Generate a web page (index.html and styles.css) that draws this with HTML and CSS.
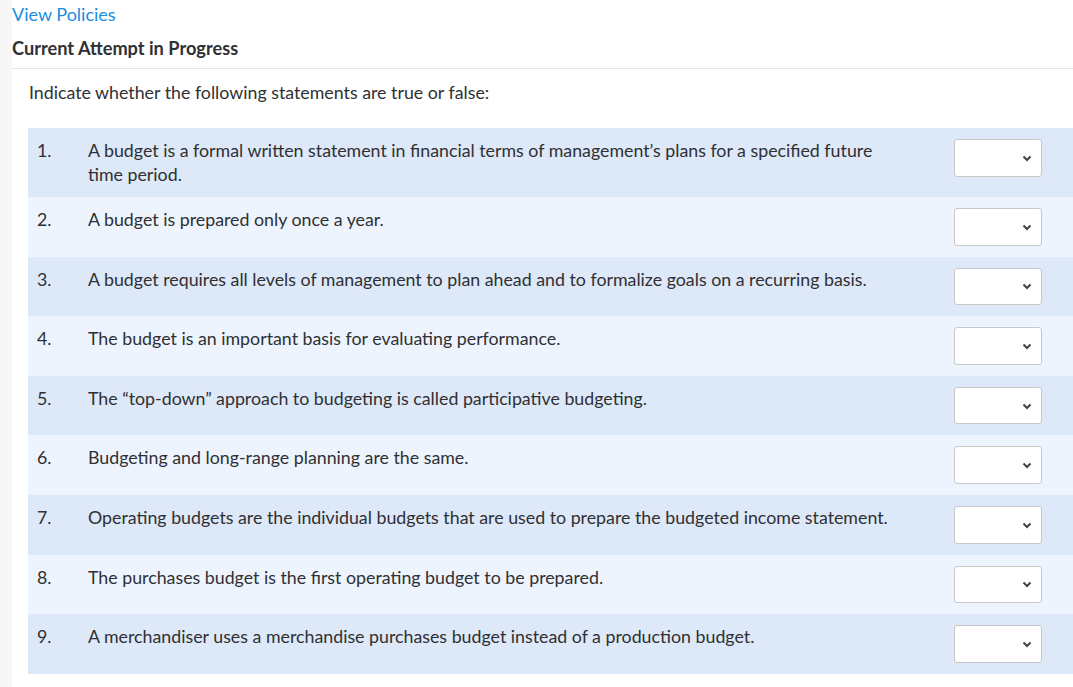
FILE: index.html
```html
<!DOCTYPE html>
<html>
<head>
<meta charset="utf-8">
<link rel="stylesheet" href="styles.css">
</head>
<body>
<div class="page">
  <div class="content">
    <a class="policies" href="#">View Policies</a>
    <div class="attempt">Current Attempt in Progress</div>
    <div class="question">
      <p class="intro">Indicate whether the following statements are true or false:</p>
      <table class="items">
        <tr class="dark"><td class="num">1.</td><td class="text">A budget is a formal written statement in financial terms of management’s plans for a specified future time period.</td><td class="sel"><div class="select"><svg width="10" height="7" viewBox="0 0 10 7"><path d="M1.5 1.5 L5 5 L8.5 1.5" fill="none" stroke="#444" stroke-width="2"/></svg></div></td></tr>
        <tr class="light"><td class="num">2.</td><td class="text">A budget is prepared only once a year.</td><td class="sel"><div class="select"><svg width="10" height="7" viewBox="0 0 10 7"><path d="M1.5 1.5 L5 5 L8.5 1.5" fill="none" stroke="#444" stroke-width="2"/></svg></div></td></tr>
        <tr class="dark"><td class="num">3.</td><td class="text">A budget requires all levels of management to plan ahead and to formalize goals on a recurring basis.</td><td class="sel"><div class="select"><svg width="10" height="7" viewBox="0 0 10 7"><path d="M1.5 1.5 L5 5 L8.5 1.5" fill="none" stroke="#444" stroke-width="2"/></svg></div></td></tr>
        <tr class="light"><td class="num">4.</td><td class="text">The budget is an important basis for evaluating performance.</td><td class="sel"><div class="select"><svg width="10" height="7" viewBox="0 0 10 7"><path d="M1.5 1.5 L5 5 L8.5 1.5" fill="none" stroke="#444" stroke-width="2"/></svg></div></td></tr>
        <tr class="dark"><td class="num">5.</td><td class="text">The “top-down” approach to budgeting is called participative budgeting.</td><td class="sel"><div class="select"><svg width="10" height="7" viewBox="0 0 10 7"><path d="M1.5 1.5 L5 5 L8.5 1.5" fill="none" stroke="#444" stroke-width="2"/></svg></div></td></tr>
        <tr class="light"><td class="num">6.</td><td class="text">Budgeting and long-range planning are the same.</td><td class="sel"><div class="select"><svg width="10" height="7" viewBox="0 0 10 7"><path d="M1.5 1.5 L5 5 L8.5 1.5" fill="none" stroke="#444" stroke-width="2"/></svg></div></td></tr>
        <tr class="dark"><td class="num">7.</td><td class="text">Operating budgets are the individual budgets that are used to prepare the budgeted income statement.</td><td class="sel"><div class="select"><svg width="10" height="7" viewBox="0 0 10 7"><path d="M1.5 1.5 L5 5 L8.5 1.5" fill="none" stroke="#444" stroke-width="2"/></svg></div></td></tr>
        <tr class="light"><td class="num">8.</td><td class="text">The purchases budget is the first operating budget to be prepared.</td><td class="sel"><div class="select"><svg width="10" height="7" viewBox="0 0 10 7"><path d="M1.5 1.5 L5 5 L8.5 1.5" fill="none" stroke="#444" stroke-width="2"/></svg></div></td></tr>
        <tr class="dark"><td class="num">9.</td><td class="text">A merchandiser uses a merchandise purchases budget instead of a production budget.</td><td class="sel"><div class="select"><svg width="10" height="7" viewBox="0 0 10 7"><path d="M1.5 1.5 L5 5 L8.5 1.5" fill="none" stroke="#444" stroke-width="2"/></svg></div></td></tr>
      </table>
    </div>
  </div>
</div>
</body>
</html>
```
FILE: styles.css
```css
html, body {
  margin: 0;
  padding: 0;
}
body {
  background: #f7f7f7;
  font-family: Lato, "Open Sans", Arial, sans-serif;
  color: #2f3033;
  font-size: 17.8px;
}
.page {
  padding-left: 12px;
  min-height: 687px;
  box-sizing: border-box;
}
.content {
  background: #fff;
  min-height: 687px;
}
.policies {
  display: block;
  color: #1a8de0;
  text-decoration: none;
  font-size: 18px;
  line-height: 24px;
  padding-top: 2px;
}
.attempt {
  font-weight: bold;
  font-size: 18.2px;
  line-height: 24px;
  padding: 10px 0 8px;
  border-bottom: 1px solid #e6e6e6;
}
.question {
  padding: 11px 0 0 16px;
}
.intro {
  margin: 0 0 24px;
  line-height: 24px;
  padding-left: 1px;
}
.items {
  border-collapse: collapse;
  width: 100%;
}
.items td {
  vertical-align: top;
  padding: 10px 0 11px;
  line-height: 24px;
}
.dark { background: #dde8f8; }
.light { background: #edf4fe; }
.num {
  width: 51px;
  padding-left: 9px !important;
}
.text {
  padding-right: 60px !important;
}
.sel {
  width: 119px;
  padding: 11px 0 !important;
  line-height: 0 !important;
}
.select {
  background: #fff;
  border: 1px solid #c8c8c8;
  border-radius: 3px;
  display: flex;
  align-items: center;
  justify-content: flex-end;
  padding-right: 9px;
  box-sizing: border-box;
  width: 88px;
  height: 37.6px;
}
.select svg {
  margin-top: 1px;
}
```
